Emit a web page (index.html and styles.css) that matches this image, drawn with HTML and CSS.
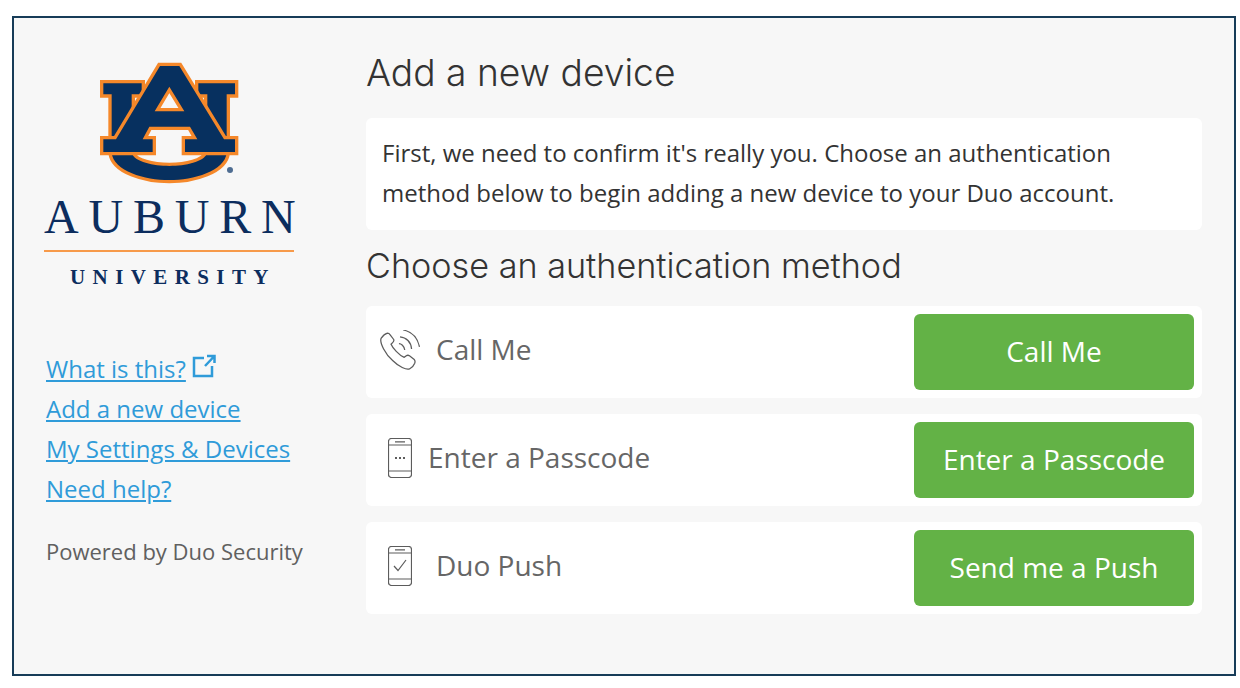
FILE: index.html
```html
<!DOCTYPE html>
<html lang="en">
<head>
  <meta charset="UTF-8">
  <title>Add a new device</title>
  <link rel="stylesheet" href="styles.css">
</head>
<body>
  <div class="frame">
    <div class="sidebar">
      <div class="logo">
        <svg class="logo-mark" viewBox="0 0 480 405" width="160" height="135">
          <path class="logo-shape" fill-rule="evenodd" d="M40 82H155V115H125V292C135 318 190 330 238 330C288 330 340 318 352 292V115H325V82H435V115H410V290C405 345 310 372 238 372C165 372 70 345 65 290V115H40Z"/>
          <path class="logo-shape" fill-rule="evenodd" d="M210 30H268L402 250H435V288H285V250H322L300 212H178L158 250H188V288H40V250H78ZM238 92L194 166H283Z"/>
          <circle class="logo-reg" cx="420" cy="342" r="9"/>
        </svg>
        <div class="logo-name">AUBURN</div>
        <div class="logo-sub">UNIVERSITY</div>
      </div>
      <ul class="side-links">
        <li>
          <a href="#">What is this?</a>
          <svg class="ext-icon" viewBox="0 0 24 24" width="24" height="24">
            <path d="M12 4H2V22H20V12M13 12L22 2.5M15 2H22.5V9"/>
          </svg>
        </li>
        <li><a href="#">Add a new device</a></li>
        <li><a href="#">My Settings &amp; Devices</a></li>
        <li><a href="#">Need help?</a></li>
      </ul>
      <p class="powered">Powered by Duo Security</p>
    </div>

    <div class="content">
      <h1 class="title">Add a new device</h1>
      <div class="message">First, we need to confirm it's really you. Choose an authentication method below to begin adding a new device to your Duo account.</div>
      <h2 class="subtitle">Choose an authentication method</h2>

      <div class="method">
        <svg class="method-icon phone" viewBox="2 1 38 38" width="40" height="40">
          <path d="M3 9C5 6 7 4.500 9 4C10 4 11 4.500 11.500 5.500L15 10C15.500 11 15 12 14 13L12.500 14.500C14 18 20 25 25 27L27 25.500C28 24.800 29 24.800 30 25.500L34.500 29C35.500 30 35.500 31 35 32.500C34 35 32 37 30 38C27 39 20 36 14 30C7 24 1.500 13 3 9Z"/>
          <path d="M20 14C22 14 25 16 25.500 20M21 7.500C27 8 31.500 12.500 32 19M24 1C32 2.500 37.500 8 39.500 17"/>
        </svg>
        <span class="method-name">Call Me</span>
        <button class="method-btn">Call Me</button>
      </div>

      <div class="method">
        <svg class="method-icon device" viewBox="0 0 24 40" width="24" height="40">
          <rect x="0.500" y="0.500" width="23" height="39" rx="3"/>
          <path d="M0.500 7H23.500M0.500 33H23.500M7 3.800H17"/>
          <path class="dots" d="M7 20H9M11 20H13M15 20H17"/>
        </svg>
        <span class="method-name">Enter a Passcode</span>
        <button class="method-btn">Enter a Passcode</button>
      </div>

      <div class="method">
        <svg class="method-icon device" viewBox="0 0 24 40" width="24" height="40">
          <rect x="0.500" y="0.500" width="23" height="39" rx="3"/>
          <path d="M0.500 7H23.500M0.500 33H23.500M7 3.800H17"/>
          <path d="M6 20L10 24.500L18 14"/>
        </svg>
        <span class="method-name name-push">Duo Push</span>
        <button class="method-btn">Send me a Push</button>
      </div>
    </div>
  </div>
</body>
</html>
```

FILE: styles.css
```css
* {
  box-sizing: border-box;
}

body {
  margin: 0;
  background: #fff;
  font-family: "Open Sans", sans-serif;
}

.frame {
  display: flex;
  width: 1224px;
  height: 660px;
  margin: 16px 0 0 12px;
  border: 2px solid #173c58;
  background: #f7f7f7;
}

.sidebar {
  width: 352px;
  padding-top: 38px;
  padding-left: 30px;
  flex-shrink: 0;
}

.logo {
  width: 250px;
}

.logo-mark {
  display: block;
  margin: 0 0 0 46px;
}

.logo-shape {
  fill: #07305f;
  stroke: #f5882a;
  stroke-width: 20;
  paint-order: stroke;
}

.logo-reg {
  fill: #4f6d92;
}

.logo-name {
  margin-top: -1px;
  padding-bottom: 6px;
  border-bottom: 2px solid #f79a4a;
  color: #0c2d5e;
  font-family: "Liberation Serif", serif;
  font-size: 48px;
  line-height: 54px;
  letter-spacing: 9.800px;
  white-space: nowrap;
}

.logo-sub {
  margin-top: 10px;
  padding-left: 26px;
  color: #0c2d5e;
  font-family: "Liberation Serif", serif;
  font-size: 21px;
  font-weight: bold;
  line-height: 30px;
  letter-spacing: 7.400px;
  white-space: nowrap;
}

.side-links {
  margin: 57px 0 0 2px;
  padding: 0;
  list-style: none;
  font-size: 24px;
  line-height: 40px;
}

.side-links a {
  color: #2f9bd9;
}

.ext-icon {
  vertical-align: 0;
  fill: none;
  stroke: #2f9bd9;
  stroke-width: 2.500;
}

.powered {
  margin: 22px 0 0 2px;
  color: #606060;
  font-size: 22px;
  line-height: 40px;
}

.content {
  width: 836px;
  padding-top: 30px;
}

.title {
  margin: 0 0 20px;
  color: #333;
  font-family: Inter, sans-serif;
  font-size: 37.200px;
  font-weight: 300;
  line-height: 50px;
}

.message {
  height: 112px;
  padding: 15px 16px;
  border-radius: 6px;
  background: #fff;
  color: #333;
  font-size: 24px;
  line-height: 40px;
}

.subtitle {
  margin: 12px 0 16px;
  color: #333;
  font-family: Inter, sans-serif;
  font-size: 34.200px;
  font-weight: 300;
  line-height: 48px;
}

.method {
  display: flex;
  align-items: center;
  height: 92px;
  margin-bottom: 16px;
  padding: 8px;
  border-radius: 6px;
  background: #fff;
}

.method-icon {
  flex-shrink: 0;
  margin-bottom: 4px;
  fill: none;
  stroke: #5c5c5c;
  stroke-width: 1.200;
}

.method-icon.phone {
  margin-left: 6px;
  margin-right: 16px;
}

.method-icon.device {
  margin-left: 14px;
  margin-right: 16px;
}

.dots {
  stroke-width: 2.200;
}

.method-name {
  flex: 1;
  padding-bottom: 6px;
  color: #666;
  font-size: 28px;
}

.name-push {
  margin-left: 8px;
}

.method-btn {
  width: 280px;
  height: 76px;
  padding-bottom: 3px;
  border: none;
  border-radius: 6px;
  background: #63b246;
  color: #fff;
  font-family: "Open Sans", sans-serif;
  font-size: 28px;
}
```
